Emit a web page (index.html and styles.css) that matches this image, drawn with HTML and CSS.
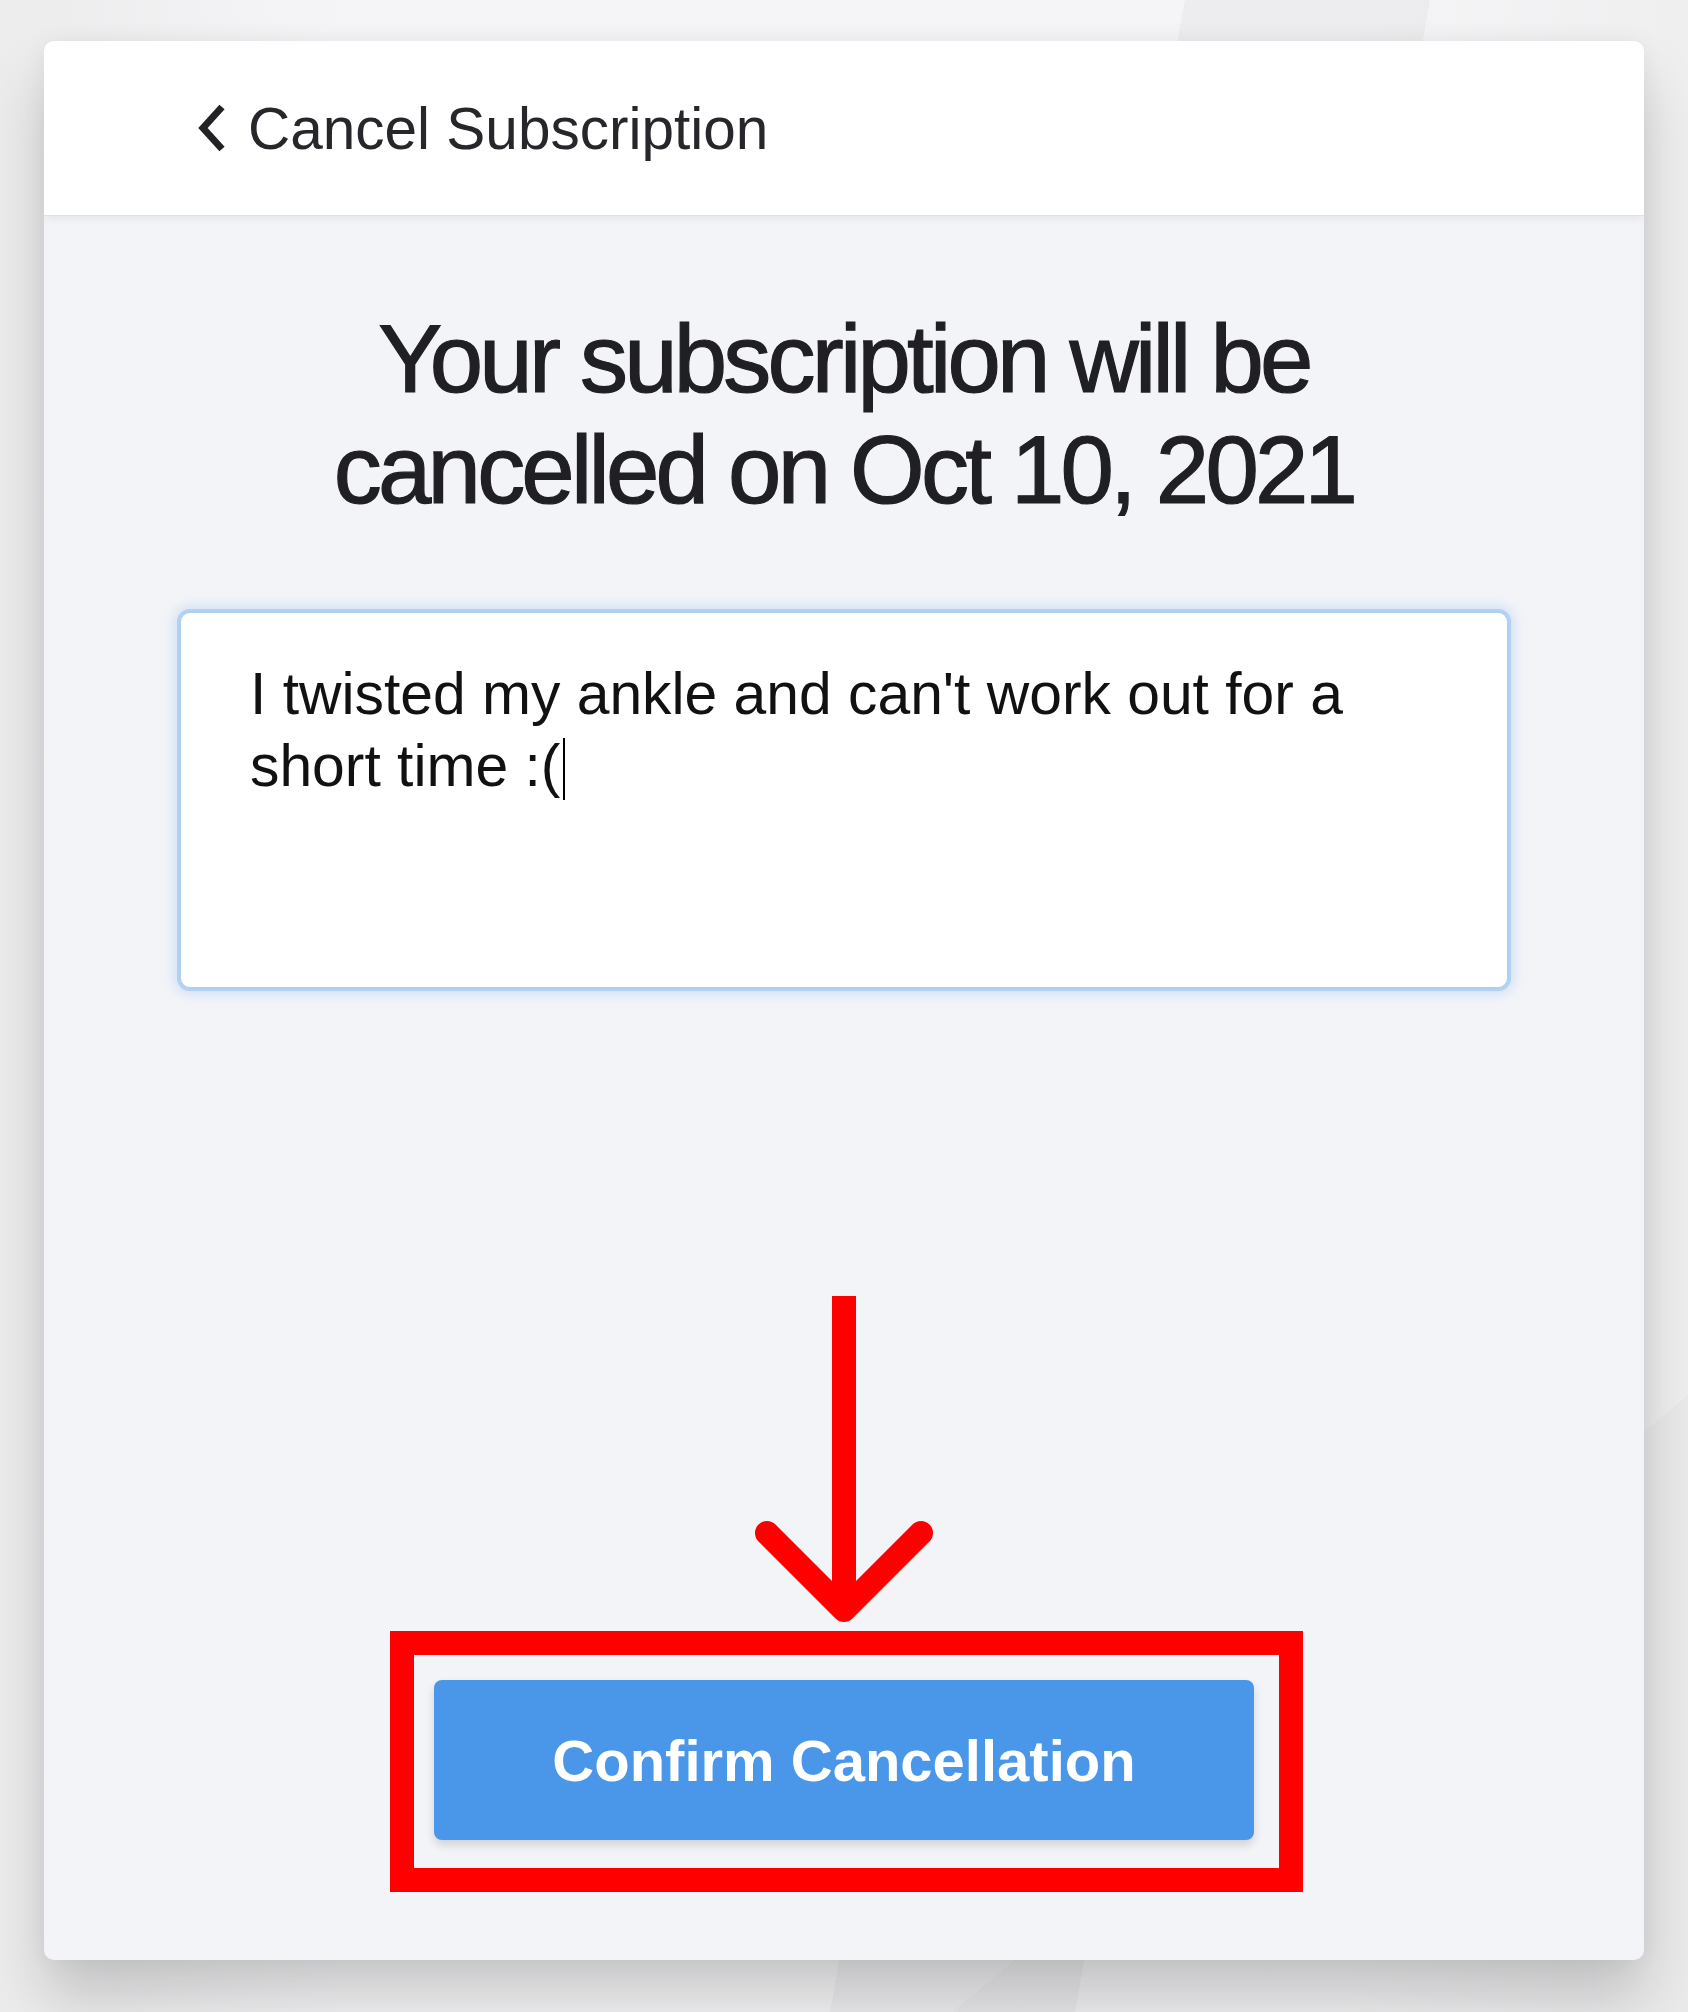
FILE: index.html
```html
<!DOCTYPE html>
<html lang="en">
<head>
  <meta charset="UTF-8">
  <title>Cancel Subscription</title>
  <meta name="viewport" content="width=device-width, initial-scale=1.0">
  <link rel="stylesheet" href="styles.css">
</head>
<body>

  <div class="card">
    <header class="card-header">
      <a class="back-link" href="#">
        <svg class="chevron" viewBox="0 0 32 48" width="32" height="48">
          <polyline points="26,3 7,24 26,45" fill="none" stroke="#222226" stroke-width="7" stroke-linejoin="miter"/>
        </svg>
        <span>Cancel Subscription</span>
      </a>
    </header>

    <main class="card-body">
      <h1 class="title">Your subscription will be<br>cancelled on Oct 10, 2021</h1>

      <div class="reason-box">I twisted my ankle and can't work out for a short time :(<span class="caret"></span></div>

      <!-- annotation arrow -->
      <svg class="arrow" viewBox="0 0 200 330" width="200" height="330">
        <line x1="100" y1="0" x2="100" y2="312" stroke="#ff0000" stroke-width="24"/>
        <polyline points="23,237 100,314 177,237" fill="none" stroke="#ff0000" stroke-width="24" stroke-linecap="round" stroke-linejoin="round"/>
      </svg>

      <div class="highlight">
        <button class="confirm-btn">Confirm Cancellation</button>
      </div>
    </main>
  </div>

</body>
</html>
```

FILE: styles.css
```css
body {
  margin: 0;
  min-height: 2012px;
  font-family: "Liberation Sans", Arial, sans-serif;
  background:
    linear-gradient(100deg, transparent 0 58%, rgba(0, 0, 0, 0.03) 58% 70%, transparent 70%),
    linear-gradient(140deg, transparent 0 82%, rgba(0, 0, 0, 0.02) 82%),
    linear-gradient(to right, #ececed, #f5f5f7 20%, #f5f5f7 80%, #efeff0);
}

.card {
  width: 1600px;
  margin: 41px 0 0 44px;
  background: #f3f4f8;
  border-radius: 10px;
  overflow: hidden;
  box-shadow: 0 40px 60px rgba(0, 0, 0, 0.18), 0 0 24px rgba(0, 0, 0, 0.05);
}

.card-header {
  position: relative;
  z-index: 1;
  box-sizing: border-box;
  height: 175px;
  padding-left: 152px;
  display: flex;
  align-items: center;
  background: #fff;
  border-bottom: 1px solid #e1e2e6;
  box-shadow: 0 3px 8px rgba(0, 0, 0, 0.06);
}

.back-link {
  display: flex;
  align-items: center;
  gap: 20px;
  color: #26262b;
  text-decoration: none;
  font-size: 58.5px;
}

.chevron {
  display: block;
}

.card-body {
  display: flex;
  flex-direction: column;
  align-items: center;
  padding: 87px 0 68px;
}

.title {
  margin: 0;
  font-size: 96px;
  font-weight: 400;
  line-height: 111px;
  letter-spacing: -3.8px;
  text-align: center;
  color: #202024;
  -webkit-text-stroke: 1.2px #202024;
}

.reason-box {
  margin-top: 87px;
  width: 1328px;
  height: 376px;
  box-sizing: border-box;
  padding: 45px 69px;
  background: #fff;
  border: 1px solid #aecff2;
  border-radius: 10px;
  box-shadow: 0 0 0 3px rgba(140, 188, 240, 0.5), 0 0 12px 6px rgba(140, 188, 240, 0.35);
  font-size: 58.8px;
  line-height: 72px;
  color: #111;
}

.caret {
  display: inline-block;
  width: 2px;
  height: 62px;
  margin-left: 3px;
  vertical-align: -14px;
  background: #000;
}

.arrow {
  display: block;
  margin-top: 308px;
}

.highlight {
  margin-top: 5px;
  margin-left: 5px;
  border: 24px solid #ff0000;
  padding: 25px 25px 28px 20px;
}

.confirm-btn {
  display: block;
  width: 820px;
  height: 160px;
  border: none;
  border-radius: 8px;
  background: #4a96e9;
  color: #fff;
  font-family: "Liberation Sans", Arial, sans-serif;
  font-size: 58px;
  font-weight: bold;
  box-shadow: 0 5px 10px rgba(0, 0, 0, 0.14);
  cursor: pointer;
}
```
